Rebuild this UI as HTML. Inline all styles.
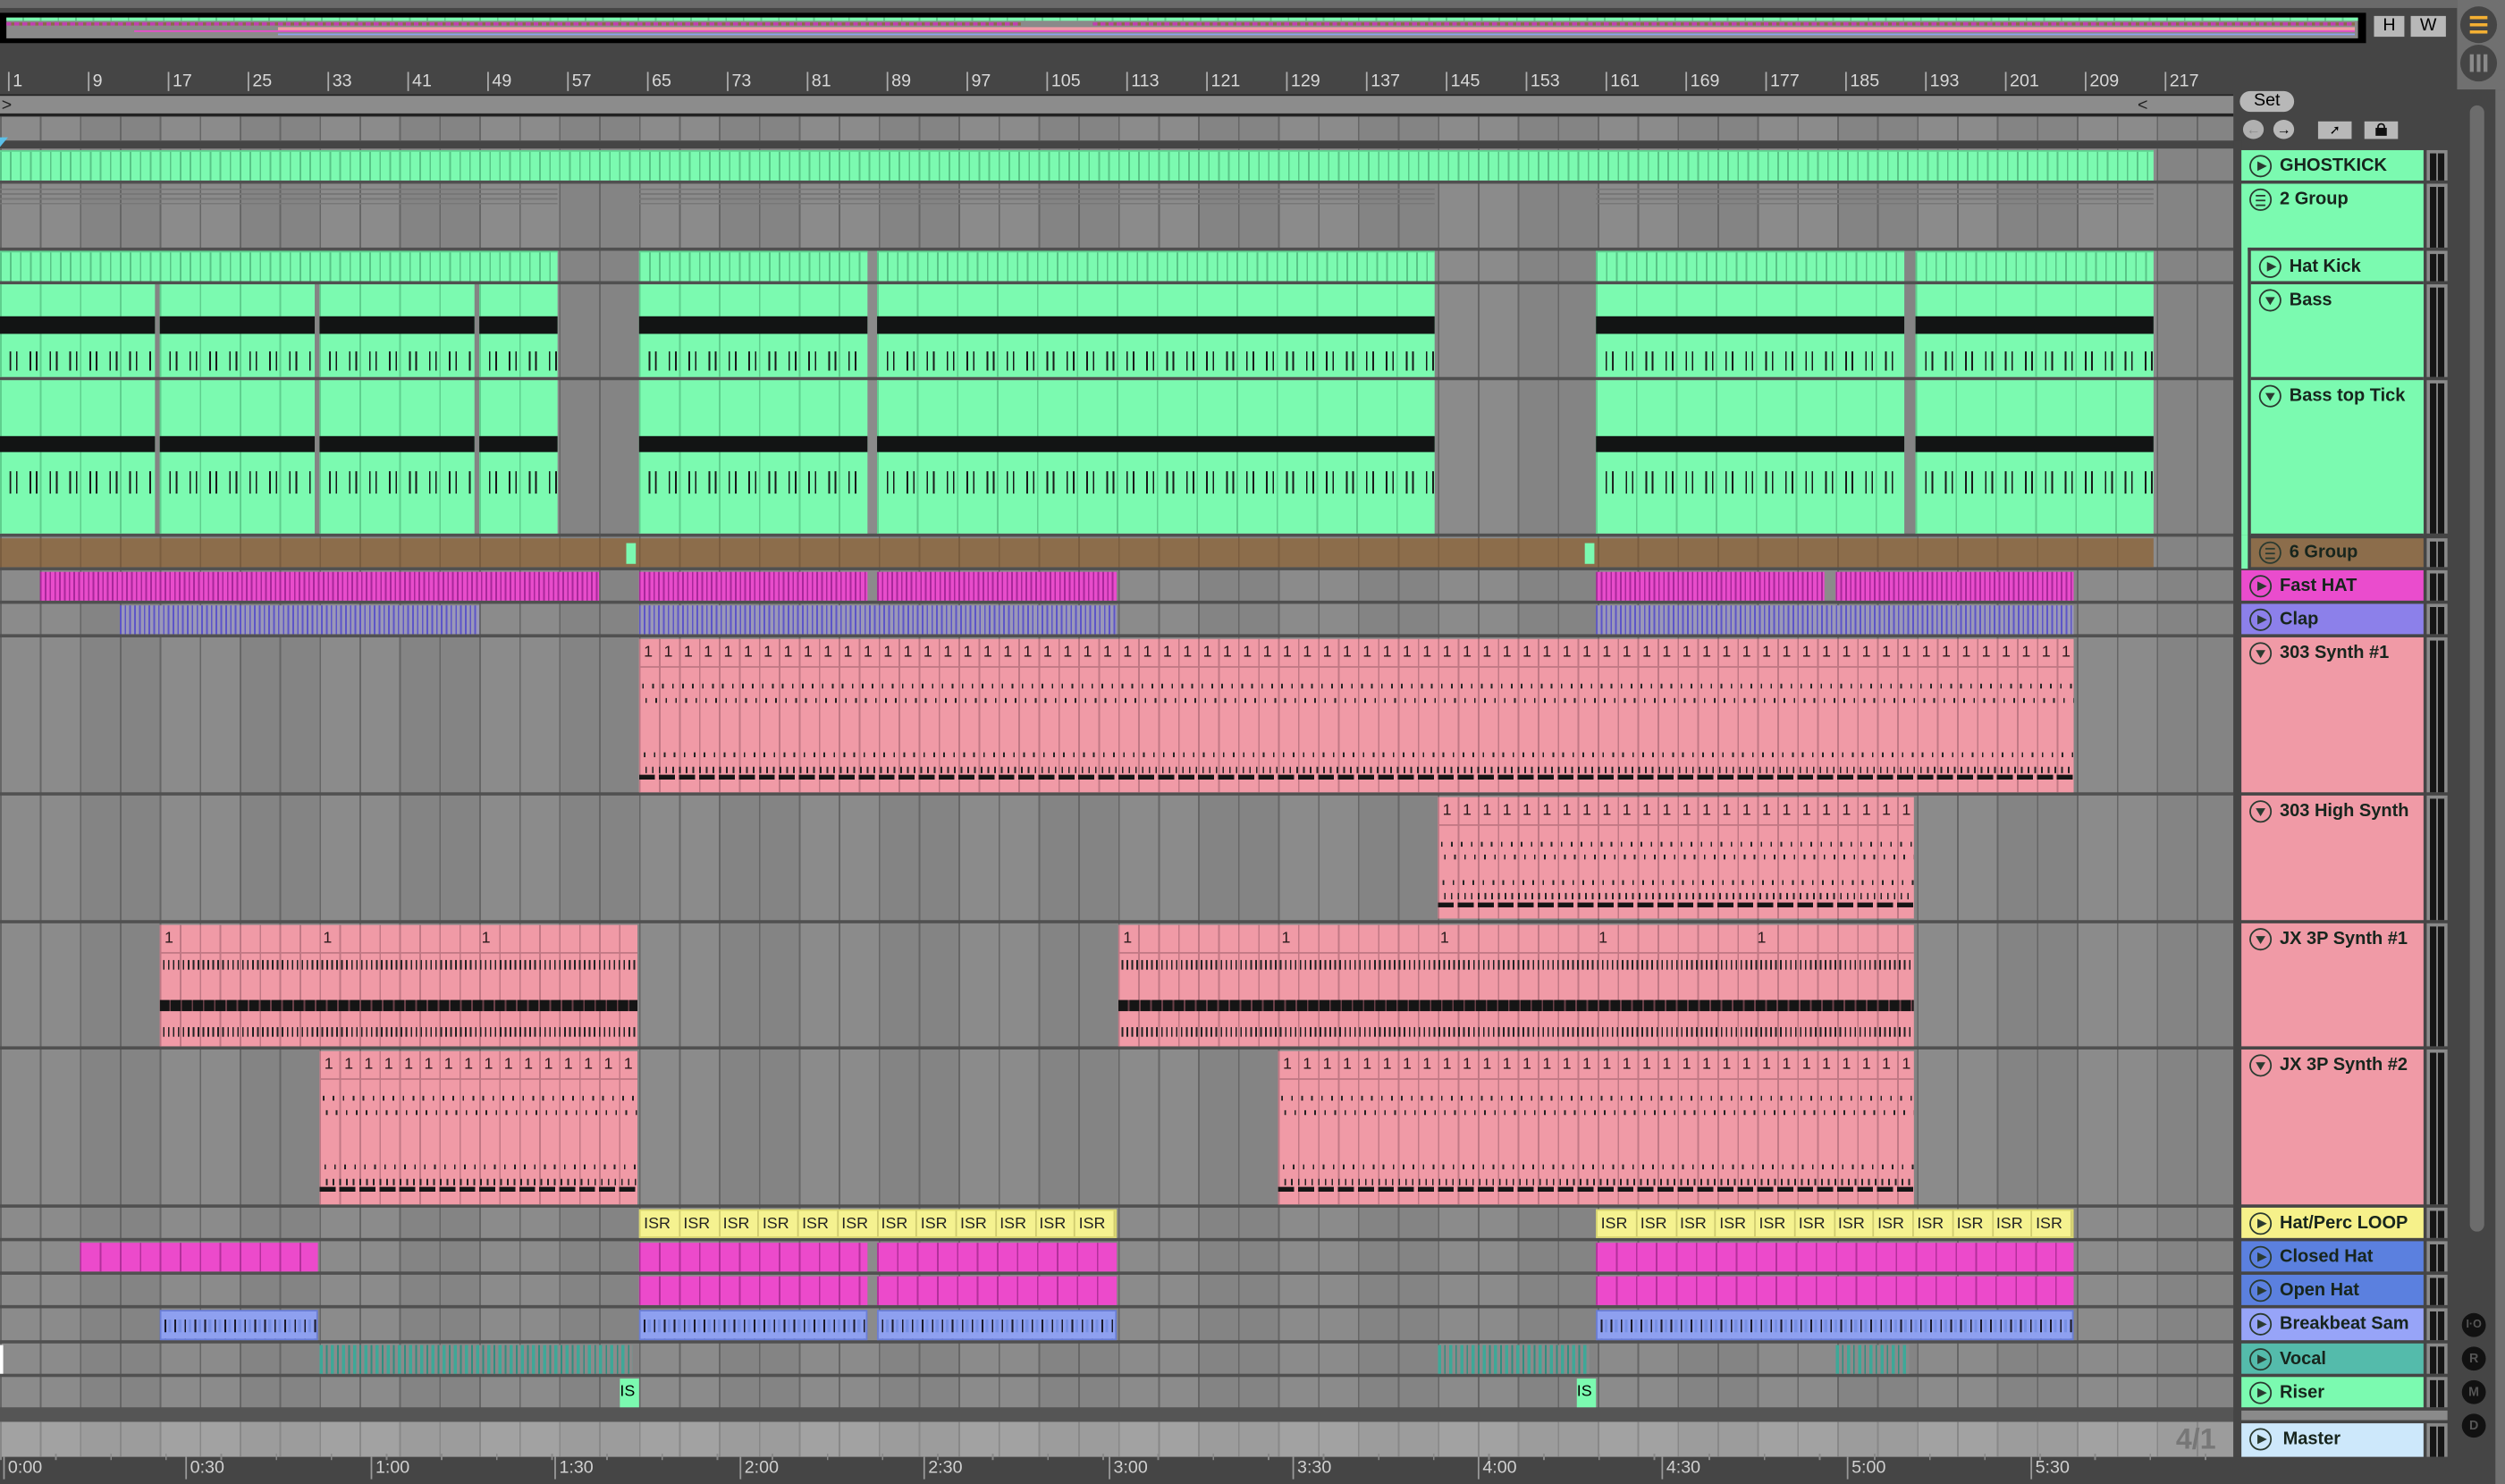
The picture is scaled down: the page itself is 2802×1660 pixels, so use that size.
<!DOCTYPE html>
<html><head><meta charset="utf-8">
<style>
*{margin:0;padding:0;box-sizing:border-box}
html,body{width:2802px;height:1660px;overflow:hidden;background:#454545}
#w{position:absolute;left:0;top:0;width:1568px;height:929px;transform:scale(1.78699,1.78687);transform-origin:0 0;background:#454545;font-family:"Liberation Sans",sans-serif}
.a{position:absolute}
.grid{background:repeating-linear-gradient(90deg,#666 0 1px,transparent 1px 25px),repeating-linear-gradient(90deg,#8b8b8b 0 50px,#848484 50px 100px)}
.sep{position:absolute;left:0;width:1398px;height:2px;background:#505050}
.gs{background:repeating-linear-gradient(90deg,#58c486 0 1px,transparent 1px 6.25px),#7bfab0;border-top:1px solid #5fd190}
.bass{background:linear-gradient(#121414,#121414) 0 20px/100% 11px no-repeat,repeating-linear-gradient(90deg,#1a1a1a 0 1px,transparent 1px 12.5px) 6px 42px/100% 12px no-repeat,repeating-linear-gradient(90deg,#1a1a1a 0 1px,transparent 1px 12.5px) 10px 42px/100% 12px no-repeat,repeating-linear-gradient(90deg,#5fcf8e 0 1px,transparent 1px 25px),#7bfab0}
.btt{background:linear-gradient(#121414,#121414) 0 35px/100% 10px no-repeat,repeating-linear-gradient(90deg,#1a1a1a 0 1px,transparent 1px 12.5px) 6px 57px/100% 14px no-repeat,repeating-linear-gradient(90deg,#1a1a1a 0 1px,transparent 1px 12.5px) 10px 57px/100% 14px no-repeat,repeating-linear-gradient(90deg,#5fcf8e 0 1px,transparent 1px 25px),#7bfab0}
.hat{background:repeating-linear-gradient(90deg,#a8289a 0 1px,#e84ccb 1px 3px)}
.clap{background:repeating-linear-gradient(90deg,#5d55c8 0 1px,#9a98b8 1px 3px)}
.pk{background:repeating-linear-gradient(90deg,#c07884 0 1px,transparent 1px 12.5px),#f09aa6;overflow:hidden}
.pk .t{position:absolute;left:3px;top:3px;font-size:10px;letter-spacing:7.68px;color:#2a1a1c;white-space:nowrap}
.tk{position:absolute;left:2px;right:0;background:repeating-linear-gradient(90deg,#222 0 1px,transparent 1px 6.25px)}
.tk2{position:absolute;left:4px;right:0;background:repeating-linear-gradient(90deg,#222 0 1px,transparent 1px 4.2px)}
.blk{position:absolute;left:0;right:0;background:repeating-linear-gradient(90deg,#151515 0 10px,transparent 10px 12.5px)}
.ch{background:repeating-linear-gradient(90deg,#b2309a 0 1px,transparent 1px 12.5px),#ec4acb}
.bb{background:linear-gradient(90deg,transparent 0 0) ,repeating-linear-gradient(90deg,#8ea0f0 0 2px,#1a1a2a 2px 3px,#8ea0f0 3px 4.5px,#7890e4 4.5px 6.25px);border:1px solid #6a7ed8;background-clip:padding-box}
.bb:before{content:"";position:absolute;left:0;right:0;top:0;height:5px;background:#8ea0f0}
.bb:after{content:"";position:absolute;left:0;right:0;bottom:0;height:4px;background:#8ea0f0}
.voc{background:repeating-linear-gradient(90deg,#3ea898 0 2px,#8a8a8a 2px 4px,#2f8f80 4px 5px,#8a8a8a 5px 7px)}
.isr{display:flex;background:#f5f290;border:1px solid #d8d570}
.isr span{width:25px;font-size:10px;color:#222;padding-left:2px;line-height:17px;border-right:1px solid #d0cc70;overflow:hidden}
.hd{position:absolute;left:1403px;width:114px;font-size:11.2px;font-weight:bold;color:#17251d;padding-left:24px;line-height:20px;white-space:nowrap}
.hd i{position:absolute;left:5px;top:3px;width:14px;height:14px;border:1.3px solid #2a3a30;border-radius:50%}
.hd i:after{content:"";position:absolute;left:4px;top:2.5px;border-left:6px solid #2a3a30;border-top:3.5px solid transparent;border-bottom:3.5px solid transparent}
.hd i.d:after{left:2.5px;top:4px;border-top:5px solid #2a3a30;border-left:3.5px solid transparent;border-right:3.5px solid transparent;border-bottom:0}
.hd i.g:after{left:2.5px;top:3px;width:6px;height:5px;border:0;border-top:1px solid #2a3a30;border-bottom:1px solid #2a3a30;background:linear-gradient(#2a3a30,#2a3a30) 0 1.5px/100% 1px no-repeat}
.mt{position:absolute;left:1519px;width:13px;background:#8a8a8a}
.mt:before{content:"";position:absolute;left:2px;top:2px;bottom:0;width:4px;background:#151515}
.mt:after{content:"";position:absolute;left:7px;top:2px;bottom:0;width:4px;background:#151515}
.rn{position:absolute;top:45px;font-size:11px;color:#d8d8d8;border-left:1px solid #aaa;padding-left:2px;line-height:12px}
.tm{position:absolute;top:912px;font-size:11px;color:#d0d0d0;border-left:1px solid #999;padding-left:2px;line-height:14px}
</style></head><body><div id="w">

<div class="a" style="left:0;top:0;width:1538px;height:5px;background:#6a6a6a"></div>
<div class="a" style="left:1538px;top:0;width:30px;height:56px;background:#707070"></div>
<div class="a" style="left:1562px;top:56px;width:6px;height:873px;background:#707070"></div>
<div class="a" style="left:0;top:8px;width:1481px;height:19px;background:#000"></div>
<div class="a" style="left:4px;top:11px;width:1472px;height:13px;background:#8a8a8a">
 <div class="a" style="left:0;top:0;width:1472px;height:2px;background:repeating-linear-gradient(90deg,#7bfab0 0 10px,#5fcf8e 10px 11px)"></div>
 <div class="a" style="left:0;top:3px;width:635px;height:2px;background:repeating-linear-gradient(90deg,#c040b0 0 3px,#8b6b4b 3px 5px)"></div>
 <div class="a" style="left:680px;top:3px;width:790px;height:2px;background:repeating-linear-gradient(90deg,#c040b0 0 3px,#8b6b4b 3px 5px)"></div>
 <div class="a" style="left:170px;top:6px;width:1300px;height:2px;background:#f09aa6"></div>
 <div class="a" style="left:80px;top:8px;width:1390px;height:1px;background:#e84ccb"></div>
 <div class="a" style="left:170px;top:10px;width:1300px;height:1px;background:#8ea0f0"></div>
</div>
<div class="a" style="left:1486px;top:10px;width:19px;height:13px;background:#b8b8b8;font-size:11px;text-align:center;line-height:13px">H</div>
<div class="a" style="left:1509px;top:10px;width:22px;height:13px;background:#b8b8b8;font-size:11px;text-align:center;line-height:13px">W</div>
<div class="a" style="left:1540px;top:4px;width:23px;height:23px;border-radius:50%;background:#454545"><div class="a" style="left:6px;top:6px;width:11px;height:11px;background:linear-gradient(#f4b033 0 2px,transparent 2px 4.5px,#f4b033 4.5px 6.5px,transparent 6.5px 9px,#f4b033 9px 11px)"></div></div>
<div class="a" style="left:1540px;top:28px;width:23px;height:23px;border-radius:50%;background:#454545"><div class="a" style="left:6px;top:6px;width:11px;height:11px;background:repeating-linear-gradient(90deg,#8a8a8a 0 2.4px,transparent 2.4px 4.3px)"></div></div>

<div class="rn" style="left:5px">1</div><div class="rn" style="left:55px">9</div><div class="rn" style="left:105px">17</div><div class="rn" style="left:155px">25</div><div class="rn" style="left:205px">33</div><div class="rn" style="left:255px">41</div><div class="rn" style="left:305px">49</div><div class="rn" style="left:355px">57</div><div class="rn" style="left:405px">65</div><div class="rn" style="left:455px">73</div><div class="rn" style="left:505px">81</div><div class="rn" style="left:555px">89</div><div class="rn" style="left:605px">97</div><div class="rn" style="left:655px">105</div><div class="rn" style="left:705px">113</div><div class="rn" style="left:755px">121</div><div class="rn" style="left:805px">129</div><div class="rn" style="left:855px">137</div><div class="rn" style="left:905px">145</div><div class="rn" style="left:955px">153</div><div class="rn" style="left:1005px">161</div><div class="rn" style="left:1055px">169</div><div class="rn" style="left:1105px">177</div><div class="rn" style="left:1155px">185</div><div class="rn" style="left:1205px">193</div><div class="rn" style="left:1255px">201</div><div class="rn" style="left:1305px">209</div><div class="rn" style="left:1355px">217</div>
<div class="a" style="left:0;top:59px;width:1398px;height:14px;background:#8c8c8c;border-top:1px solid #222;border-bottom:2px solid #222"></div>
<div class="a" style="left:1px;top:61px;color:#222;font-size:11px;line-height:10px">&gt;</div>
<div class="a" style="left:1338px;top:61px;color:#222;font-size:11px;line-height:10px">&lt;</div>
<div class="a grid" style="left:0;top:73px;width:1398px;height:15px"></div>
<div class="a" style="left:1402px;top:57px;width:34px;height:13px;border-radius:7px;background:#b8b8b8;font-size:11px;text-align:center;line-height:13px">Set</div>
<div class="a" style="left:1404px;top:75px;width:13px;height:12px;border-radius:50%;background:#b0b0b0;font-size:9px;text-align:center;line-height:12px;color:#888">&#8592;</div>
<div class="a" style="left:1423px;top:75px;width:13px;height:12px;border-radius:50%;background:#b8b8b8;font-size:9px;text-align:center;line-height:12px">&#8594;</div>
<div class="a" style="left:1451px;top:76px;width:21px;height:11px;background:#b8b8b8;font-size:8px;text-align:center;line-height:11px">&#10138;</div>
<div class="a" style="left:1480px;top:76px;width:21px;height:11px;background:#b8b8b8"><div class="a" style="left:7px;top:4px;width:7px;height:5px;background:#111"></div><div class="a" style="left:8px;top:1px;width:5px;height:5px;border:1px solid #111;border-bottom:0;border-radius:3px 3px 0 0"></div></div>

<div class="a grid" style="left:0;top:93px;width:1398px;height:790px"></div>
<div class="a" style="left:0;top:890px;width:1398px;height:22px;background:repeating-linear-gradient(90deg,#888 0 1px,transparent 1px 25px),repeating-linear-gradient(90deg,#a2a2a2 0 50px,#9c9c9c 50px 100px)"></div>
<div class="a" style="left:1362px;top:890px;font-size:18px;font-weight:bold;color:#777;line-height:22px">4/1</div>
<div class="a" style="left:0;top:86px;border-top:6px solid #5bc0e8;border-right:5px solid transparent"></div>

<div class="sep" style="top:113px"></div><div class="sep" style="top:155px"></div><div class="sep" style="top:176px"></div><div class="sep" style="top:236px"></div><div class="sep" style="top:334px"></div><div class="sep" style="top:355px"></div><div class="sep" style="top:376px"></div><div class="sep" style="top:397px"></div><div class="sep" style="top:496px"></div><div class="sep" style="top:576px"></div><div class="sep" style="top:655px"></div><div class="sep" style="top:754px"></div><div class="sep" style="top:775px"></div><div class="sep" style="top:796px"></div><div class="sep" style="top:817px"></div><div class="sep" style="top:839px"></div><div class="sep" style="top:860px"></div><div class="sep" style="top:881px;height:9px;background:#555"></div>

<div class="a gs" style="left:0;top:94px;width:1348px;height:19px"></div>
<div class="a" style="left:0;top:118px;width:349px;height:10px;background:repeating-linear-gradient(#777 0 1px,transparent 1px 3px)"></div>
<div class="a" style="left:400px;top:118px;width:498px;height:10px;background:repeating-linear-gradient(#777 0 1px,transparent 1px 3px)"></div>
<div class="a" style="left:999px;top:118px;width:349px;height:10px;background:repeating-linear-gradient(#777 0 1px,transparent 1px 3px)"></div>
<div class="a gs" style="left:0;top:157px;width:349px;height:19px"></div>
<div class="a gs" style="left:400px;top:157px;width:143px;height:19px"></div>
<div class="a gs" style="left:549px;top:157px;width:349px;height:19px"></div>
<div class="a gs" style="left:999px;top:157px;width:193px;height:19px"></div>
<div class="a gs" style="left:1199px;top:157px;width:149px;height:19px"></div>
<div class="a bass" style="left:0;top:178px;width:97px;height:58px"></div>
<div class="a bass" style="left:100px;top:178px;width:97px;height:58px"></div>
<div class="a bass" style="left:200px;top:178px;width:97px;height:58px"></div>
<div class="a bass" style="left:300px;top:178px;width:49px;height:58px"></div>
<div class="a bass" style="left:400px;top:178px;width:143px;height:58px"></div>
<div class="a bass" style="left:549px;top:178px;width:349px;height:58px"></div>
<div class="a bass" style="left:999px;top:178px;width:193px;height:58px"></div>
<div class="a bass" style="left:1199px;top:178px;width:149px;height:58px"></div>
<div class="a btt" style="left:0;top:238px;width:97px;height:96px"></div>
<div class="a btt" style="left:100px;top:238px;width:97px;height:96px"></div>
<div class="a btt" style="left:200px;top:238px;width:97px;height:96px"></div>
<div class="a btt" style="left:300px;top:238px;width:49px;height:96px"></div>
<div class="a btt" style="left:400px;top:238px;width:143px;height:96px"></div>
<div class="a btt" style="left:549px;top:238px;width:349px;height:96px"></div>
<div class="a btt" style="left:999px;top:238px;width:193px;height:96px"></div>
<div class="a btt" style="left:1199px;top:238px;width:149px;height:96px"></div>
<div class="a" style="left:0;top:337px;width:1348px;height:18px;background:repeating-linear-gradient(90deg,#7a5d3f 0 1px,transparent 1px 25px),#8c6d4b"></div>
<div class="a" style="left:392px;top:340px;width:6px;height:13px;background:#7bfab0"></div>
<div class="a" style="left:992px;top:340px;width:6px;height:13px;background:#7bfab0"></div>
<div class="a hat" style="left:25px;top:358px;width:350px;height:18px"></div>
<div class="a hat" style="left:400px;top:358px;width:143px;height:18px"></div>
<div class="a hat" style="left:549px;top:358px;width:150px;height:18px"></div>
<div class="a hat" style="left:999px;top:358px;width:143px;height:18px"></div>
<div class="a hat" style="left:1149px;top:358px;width:149px;height:18px"></div>
<div class="a clap" style="left:75px;top:379px;width:225px;height:18px"></div>
<div class="a clap" style="left:400px;top:379px;width:299px;height:18px"></div>
<div class="a clap" style="left:999px;top:379px;width:299px;height:18px"></div>

<div class="a pk" style="left:400px;top:400px;width:898px;height:96px">
 <div class="t">111111111111111111111111111111111111111111111111111111111111111111111111</div>
 <div class="a" style="left:0;right:0;top:17px;height:1px;background:#c07884"></div>
 <div class="tk" style="top:28px;height:3px"></div>
 <div class="tk" style="top:37px;height:3px;left:4px"></div>
 <div class="tk" style="top:71px;height:3px;left:3px"></div>
 <div class="tk2" style="top:80px;height:4px"></div>
 <div class="blk" style="top:85px;height:3px"></div>
</div>
<div class="a pk" style="left:900px;top:499px;width:298px;height:76px">
 <div class="t">111111111111111111111111</div>
 <div class="a" style="left:0;right:0;top:17px;height:1px;background:#c07884"></div>
 <div class="tk" style="top:28px;height:3px"></div>
 <div class="tk" style="top:36px;height:3px;left:4px"></div>
 <div class="tk" style="top:52px;height:3px;left:3px"></div>
 <div class="tk2" style="top:60px;height:4px"></div>
 <div class="blk" style="top:66px;height:3px"></div>
</div>
<div class="a pk" style="left:100px;top:579px;width:299px;height:76px">
 <div class="t" style="letter-spacing:94.4px">111</div>
 <div class="a" style="left:0;right:0;top:17px;height:1px;background:#c07884"></div>
 <div class="tk2" style="top:22px;height:6px;left:2px;background:repeating-linear-gradient(90deg,#222 0 1px,transparent 1px 3.1px)"></div>
 <div class="a" style="left:0;right:0;top:47px;height:7px;background:repeating-linear-gradient(90deg,#151515 0 6px,#6a4048 6px 7px)"></div>
 <div class="tk2" style="top:64px;height:6px;left:2px;background:repeating-linear-gradient(90deg,#222 0 1px,transparent 1px 3.1px)"></div>
</div>
<div class="a pk" style="left:700px;top:579px;width:498px;height:76px">
 <div class="t" style="letter-spacing:94.4px">11111</div>
 <div class="a" style="left:0;right:0;top:17px;height:1px;background:#c07884"></div>
 <div class="tk2" style="top:22px;height:6px;left:2px;background:repeating-linear-gradient(90deg,#222 0 1px,transparent 1px 3.1px)"></div>
 <div class="a" style="left:0;right:0;top:47px;height:7px;background:repeating-linear-gradient(90deg,#151515 0 6px,#6a4048 6px 7px)"></div>
 <div class="tk2" style="top:64px;height:6px;left:2px;background:repeating-linear-gradient(90deg,#222 0 1px,transparent 1px 3.1px)"></div>
</div>
<div class="a pk" style="left:200px;top:658px;width:199px;height:96px">
 <div class="t">1111111111111111</div>
 <div class="a" style="left:0;right:0;top:17px;height:1px;background:#c07884"></div>
 <div class="tk" style="top:28px;height:3px"></div>
 <div class="tk" style="top:37px;height:3px;left:4px"></div>
 <div class="tk" style="top:71px;height:3px;left:3px"></div>
 <div class="tk2" style="top:80px;height:4px"></div>
 <div class="blk" style="top:85px;height:3px"></div>
</div>
<div class="a pk" style="left:800px;top:658px;width:398px;height:96px">
 <div class="t">11111111111111111111111111111111</div>
 <div class="a" style="left:0;right:0;top:17px;height:1px;background:#c07884"></div>
 <div class="tk" style="top:28px;height:3px"></div>
 <div class="tk" style="top:37px;height:3px;left:4px"></div>
 <div class="tk" style="top:71px;height:3px;left:3px"></div>
 <div class="tk2" style="top:80px;height:4px"></div>
 <div class="blk" style="top:85px;height:3px"></div>
</div>

<div class="a isr" style="left:400px;top:757px;width:299px;height:18px"><span>ISR</span><span>ISR</span><span>ISR</span><span>ISR</span><span>ISR</span><span>ISR</span><span>ISR</span><span>ISR</span><span>ISR</span><span>ISR</span><span>ISR</span><span>ISR</span></div>
<div class="a isr" style="left:999px;top:757px;width:299px;height:18px"><span>ISR</span><span>ISR</span><span>ISR</span><span>ISR</span><span>ISR</span><span>ISR</span><span>ISR</span><span>ISR</span><span>ISR</span><span>ISR</span><span>ISR</span><span>ISR</span></div>
<div class="a ch" style="left:50px;top:778px;width:149px;height:18px"></div>
<div class="a ch" style="left:400px;top:778px;width:143px;height:18px"></div>
<div class="a ch" style="left:549px;top:778px;width:150px;height:18px"></div>
<div class="a ch" style="left:999px;top:778px;width:299px;height:18px"></div>
<div class="a ch" style="left:400px;top:799px;width:143px;height:18px"></div>
<div class="a ch" style="left:549px;top:799px;width:150px;height:18px"></div>
<div class="a ch" style="left:999px;top:799px;width:299px;height:18px"></div>
<div class="a bb" style="left:100px;top:820px;width:99px;height:19px"></div>
<div class="a bb" style="left:400px;top:820px;width:143px;height:19px"></div>
<div class="a bb" style="left:549px;top:820px;width:150px;height:19px"></div>
<div class="a bb" style="left:999px;top:820px;width:299px;height:19px"></div>
<div class="a voc" style="left:200px;top:842px;width:196px;height:18px"></div>
<div class="a voc" style="left:900px;top:842px;width:95px;height:18px"></div>
<div class="a voc" style="left:1149px;top:842px;width:46px;height:18px"></div>
<div class="a" style="left:0;top:842px;width:2px;height:18px;background:#fff"></div>
<div class="a" style="left:388px;top:863px;width:12px;height:18px;background:#7bfab0;font-size:10px;line-height:18px;overflow:hidden">IS</div>
<div class="a" style="left:987px;top:863px;width:12px;height:18px;background:#7bfab0;font-size:10px;line-height:18px;overflow:hidden">IS</div>

<div class="a" style="left:1398px;top:88px;width:5px;height:824px;background:#454545"></div>

<div class="hd" style="top:94px;height:19px;background:#7bfab0"><i></i>GHOSTKICK</div>
<div class="hd" style="top:115px;height:220px;background:#7bfab0;line-height:20px"><i class="g"></i>2 Group</div>
<div class="a" style="left:1407px;top:155px;width:110px;height:2px;background:#454545"></div>
<div class="a" style="left:1407px;top:155px;width:2px;height:201px;background:#454545"></div>
<div class="hd" style="left:1409px;width:108px;top:157px;height:19px;background:#7bfab0"><i></i>Hat Kick</div>
<div class="a" style="left:1409px;top:176px;width:108px;height:2px;background:#454545"></div>
<div class="hd" style="left:1409px;width:108px;top:178px;height:58px;background:#7bfab0"><i class="d"></i>Bass</div>
<div class="a" style="left:1409px;top:236px;width:108px;height:2px;background:#454545"></div>
<div class="hd" style="left:1409px;width:108px;top:238px;height:96px;background:#7bfab0"><i class="d"></i>Bass top Tick</div>
<div class="a" style="left:1409px;top:334px;width:108px;height:3px;background:#454545"></div>
<div class="hd" style="left:1409px;width:108px;top:337px;height:18px;background:#8c6d4b;line-height:19px"><i class="g" style="top:2px"></i>6 Group</div>
<div class="a" style="left:1403px;top:335px;width:4px;height:21px;background:#7bfab0"></div>
<div class="hd" style="top:357px;height:19px;background:#ea4ccd"><i></i>Fast HAT</div>
<div class="hd" style="top:378px;height:19px;background:#8c80ea"><i></i>Clap</div>
<div class="hd" style="top:399px;height:97px;background:#f09aa6"><i class="d"></i>303 Synth #1</div>
<div class="hd" style="top:498px;height:78px;background:#f09aa6"><i class="d"></i>303 High Synth</div>
<div class="hd" style="top:578px;height:77px;background:#f09aa6"><i class="d"></i>JX 3P Synth #1</div>
<div class="hd" style="top:657px;height:97px;background:#f09aa6"><i class="d"></i>JX 3P Synth #2</div>
<div class="hd" style="top:756px;height:19px;background:#f6f18a"><i></i>Hat/Perc LOOP</div>
<div class="hd" style="top:777px;height:19px;background:#5b80df"><i></i>Closed Hat</div>
<div class="hd" style="top:798px;height:19px;background:#5b80df"><i></i>Open Hat</div>
<div class="hd" style="top:819px;height:20px;background:#97a4f8"><i></i>Breakbeat Sam</div>
<div class="hd" style="top:841px;height:19px;background:#54bbab"><i></i>Vocal</div>
<div class="hd" style="top:862px;height:19px;background:#7bfab0"><i></i>Riser</div>
<div class="a" style="left:1403px;top:883px;width:129px;height:6px;background:#8a8a8a"></div>
<div class="hd" style="top:891px;height:21px;background:#cde8fb;padding-left:26px"><i></i>Master</div>

<div class="mt" style="top:94px;height:19px"></div>
<div class="mt" style="top:115px;height:40px"></div>
<div class="mt" style="top:157px;height:19px"></div>
<div class="mt" style="top:178px;height:58px"></div>
<div class="mt" style="top:238px;height:96px"></div>
<div class="mt" style="top:337px;height:18px"></div>
<div class="mt" style="top:357px;height:19px"></div>
<div class="mt" style="top:378px;height:19px"></div>
<div class="mt" style="top:399px;height:97px"></div>
<div class="mt" style="top:498px;height:78px"></div>
<div class="mt" style="top:578px;height:77px"></div>
<div class="mt" style="top:657px;height:97px"></div>
<div class="mt" style="top:756px;height:19px"></div>
<div class="mt" style="top:777px;height:19px"></div>
<div class="mt" style="top:798px;height:19px"></div>
<div class="mt" style="top:819px;height:20px"></div>
<div class="mt" style="top:841px;height:19px"></div>
<div class="mt" style="top:862px;height:19px"></div>
<div class="mt" style="top:891px;height:21px"></div>

<div class="a" style="left:1546px;top:66px;width:9px;height:705px;border-radius:5px;background:#6c6c6c"></div>
<div class="a" style="left:1541px;top:822px;width:15px;height:15px;border-radius:50%;background:#111;color:#555;font-size:7px;text-align:center;line-height:15px;font-weight:bold">I·O</div>
<div class="a" style="left:1541px;top:843px;width:15px;height:15px;border-radius:50%;background:#111;color:#555;font-size:8px;text-align:center;line-height:15px;font-weight:bold">R</div>
<div class="a" style="left:1541px;top:864px;width:15px;height:15px;border-radius:50%;background:#111;color:#555;font-size:8px;text-align:center;line-height:15px;font-weight:bold">M</div>
<div class="a" style="left:1541px;top:885px;width:15px;height:15px;border-radius:50%;background:#111;color:#555;font-size:8px;text-align:center;line-height:15px;font-weight:bold">D</div>

<div class="a" style="left:0;top:910px;width:1398px;height:4px;background:repeating-linear-gradient(90deg,#888 0 1px,transparent 1px 34.5px)"></div>
<div class="tm" style="left:2px">0:00</div><div class="tm" style="left:116px">0:30</div><div class="tm" style="left:232px">1:00</div><div class="tm" style="left:347px">1:30</div><div class="tm" style="left:463px">2:00</div><div class="tm" style="left:578px">2:30</div><div class="tm" style="left:694px">3:00</div><div class="tm" style="left:809px">3:30</div><div class="tm" style="left:925px">4:00</div><div class="tm" style="left:1040px">4:30</div><div class="tm" style="left:1156px">5:00</div><div class="tm" style="left:1271px">5:30</div>
</div></body></html>
